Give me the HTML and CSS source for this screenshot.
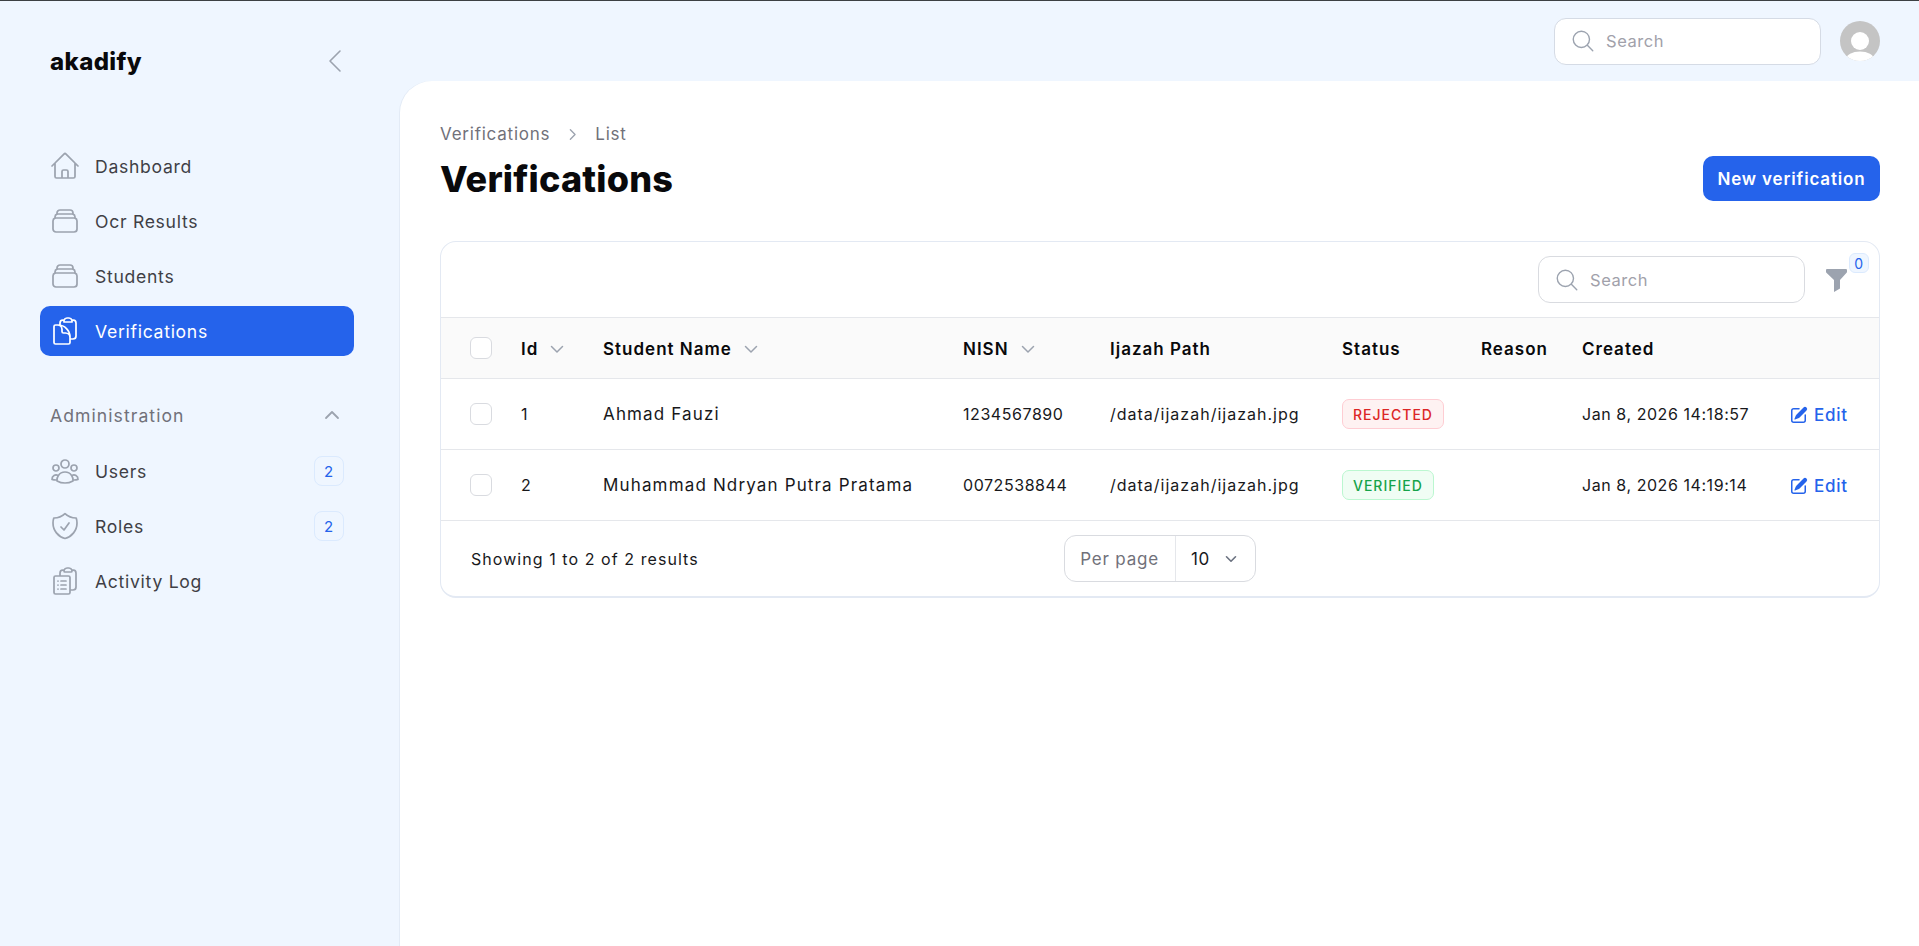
FILE: index.html
```html
<!DOCTYPE html>
<html lang="en">

<head>
    <meta charset="UTF-8">
    <meta name="viewport" content="width=device-width, initial-scale=1.0">
    <title>Verifications - akadify</title>
    <link rel="stylesheet" href="styles.css">
</head>

<body>
    <div class="app">
        <aside class="sidebar">
            <div class="sidebar__head">
                <span class="logo">akadify</span>
                <svg class="sidebar__collapse" viewBox="0 0 24 24" fill="none" stroke="currentColor" stroke-width="1.2" stroke-linecap="round" stroke-linejoin="round"><path d="M15.75 19.5L8.25 12l7.5-7.5"/></svg>
            </div>
            <nav class="nav">
                <ul class="nav__list">
                    <li><a class="nav__link" href="#">
                        <svg class="nav__icon" viewBox="0 0 24 24" fill="none" stroke="currentColor" stroke-linecap="round" stroke-linejoin="round"><path d="M2.25 12l8.954-8.955c.44-.439 1.152-.439 1.591 0L21.75 12M4.5 9.75v10.125c0 .621.504 1.125 1.125 1.125H9.75v-4.875c0-.621.504-1.125 1.125-1.125h2.25c.621 0 1.125.504 1.125 1.125V21h4.125c.621 0 1.125-.504 1.125-1.125V9.75M8.25 21h8.25"/></svg>
                        <span>Dashboard</span></a></li>
                    <li><a class="nav__link" href="#">
                        <svg class="nav__icon" viewBox="0 0 24 24" fill="none" stroke="currentColor" stroke-linecap="round" stroke-linejoin="round"><path d="M6 6.878V6a2.25 2.25 0 012.25-2.25h7.5A2.25 2.25 0 0118 6v.878m-12 0c.235-.083.487-.128.75-.128h10.5c.263 0 .515.045.75.128m-12 0A2.25 2.25 0 004.5 9v.878m13.5-3A2.25 2.25 0 0119.5 9v.878m0 0a2.246 2.246 0 00-.75-.128H5.25c-.263 0-.515.045-.75.128m15 0A2.25 2.25 0 0121 12v6a2.25 2.25 0 01-2.25 2.25H5.25A2.25 2.25 0 013 18v-6c0-.98.626-1.813 1.5-2.122"/></svg>
                        <span>Ocr Results</span></a></li>
                    <li><a class="nav__link" href="#">
                        <svg class="nav__icon" viewBox="0 0 24 24" fill="none" stroke="currentColor" stroke-linecap="round" stroke-linejoin="round"><path d="M6 6.878V6a2.25 2.25 0 012.25-2.25h7.5A2.25 2.25 0 0118 6v.878m-12 0c.235-.083.487-.128.75-.128h10.5c.263 0 .515.045.75.128m-12 0A2.25 2.25 0 004.5 9v.878m13.5-3A2.25 2.25 0 0119.5 9v.878m0 0a2.246 2.246 0 00-.75-.128H5.25c-.263 0-.515.045-.75.128m15 0A2.25 2.25 0 0121 12v6a2.25 2.25 0 01-2.25 2.25H5.25A2.25 2.25 0 013 18v-6c0-.98.626-1.813 1.5-2.122"/></svg>
                        <span>Students</span></a></li>
                    <li><a class="nav__link nav__link--active" href="#">
                        <svg class="nav__icon" viewBox="0 0 24 24" fill="none" stroke="currentColor" stroke-linecap="round" stroke-linejoin="round"><path d="M8.25 7.5V6.108c0-1.135.845-2.098 1.976-2.192.373-.03.748-.057 1.123-.08M15.75 18H18a2.25 2.25 0 002.25-2.25V6.108c0-1.135-.845-2.098-1.976-2.192a48.424 48.424 0 00-1.123-.08M15.75 18.75v-1.875a3.375 3.375 0 00-3.375-3.375h-1.5a1.125 1.125 0 01-1.125-1.125v-1.5A3.375 3.375 0 006.375 7.5H5.25m11.9-3.664A2.251 2.251 0 0015 2.25h-1.5a2.251 2.251 0 00-2.15 1.586m5.8 0c.065.21.1.433.1.664v.75h-6V4.5c0-.231.035-.454.1-.664M6.75 7.5H4.875c-.621 0-1.125.504-1.125 1.125v12c0 .621.504 1.125 1.125 1.125h9.75c.621 0 1.125-.504 1.125-1.125V16.5a9 9 0 00-9-9z"/></svg>
                        <span>Verifications</span></a></li>
                </ul>

                <div class="nav__group">
                    <span>Administration</span>
                    <svg class="nav__group-icon" viewBox="0 0 20 20" fill="none" stroke="currentColor" stroke-width="1.5" stroke-linecap="round" stroke-linejoin="round"><path d="M5 12.5l5-5 5 5"/></svg>
                </div>
                <ul class="nav__list">
                    <li><a class="nav__link" href="#">
                        <svg class="nav__icon" viewBox="0 0 24 24" fill="none" stroke="currentColor" stroke-linecap="round" stroke-linejoin="round"><path d="M18 18.72a9.094 9.094 0 003.741-.479 3 3 0 00-4.682-2.72m.94 3.198l.001.031c0 .225-.012.447-.037.666A11.944 11.944 0 0112 21c-2.17 0-4.207-.576-5.963-1.584A6.062 6.062 0 016 18.719m12 0a5.971 5.971 0 00-.941-3.197m0 0A5.995 5.995 0 0012 12.75a5.995 5.995 0 00-5.058 2.772m0 0a3 3 0 00-4.681 2.72 8.986 8.986 0 003.74.477m.94-3.197a5.971 5.971 0 00-.94 3.197M15 6.75a3 3 0 11-6 0 3 3 0 016 0zm6 3a2.25 2.25 0 11-4.5 0 2.25 2.25 0 014.5 0zm-13.5 0a2.25 2.25 0 11-4.5 0 2.25 2.25 0 014.5 0z"/></svg>
                        <span>Users</span><span class="count">2</span></a></li>
                    <li><a class="nav__link" href="#">
                        <svg class="nav__icon" viewBox="0 0 24 24" fill="none" stroke="currentColor" stroke-linecap="round" stroke-linejoin="round"><path d="M9 12.75L11.25 15 15 9.75m-3-7.036A11.959 11.959 0 013.598 6 11.99 11.99 0 003 9.749c0 5.592 3.824 10.29 9 11.623 5.176-1.332 9-6.03 9-11.622 0-1.31-.21-2.571-.598-3.751h-.152c-3.196 0-6.1-1.248-8.25-3.286z"/></svg>
                        <span>Roles</span><span class="count">2</span></a></li>
                    <li><a class="nav__link" href="#">
                        <svg class="nav__icon" viewBox="0 0 24 24" fill="none" stroke="currentColor" stroke-linecap="round" stroke-linejoin="round"><path d="M9 12h3.75M9 15h3.75M9 18h3.75m3 .75H18a2.25 2.25 0 002.25-2.25V6.108c0-1.135-.845-2.098-1.976-2.192a48.424 48.424 0 00-1.123-.08m-5.801 0c-.065.21-.1.433-.1.664 0 .414.336.75.75.75h4.5a.75.75 0 00.75-.75 2.25 2.25 0 00-.1-.664m-5.8 0A2.251 2.251 0 0113.5 2.25H15c1.012 0 1.867.668 2.15 1.586m-5.8 0c-.376.023-.75.05-1.124.08C9.095 4.01 8.25 4.973 8.25 6.108V8.25m0 0H4.875c-.621 0-1.125.504-1.125 1.125v11.25c0 .621.504 1.125 1.125 1.125h9.75c.621 0 1.125-.504 1.125-1.125V9.375c0-.621-.504-1.125-1.125-1.125H8.25zM6.75 12h.008v.008H6.75V12zm0 3h.008v.008H6.75V15zm0 3h.008v.008H6.75V18z"/></svg>
                        <span>Activity Log</span></a></li>
                </ul>
            </nav>
        </aside>

        <div class="page">
            <header class="topbar">
                <label class="search search--top">
                    <svg class="search__icon" viewBox="0 0 24 24" fill="none" stroke="currentColor" stroke-linecap="round" stroke-linejoin="round"><path d="M21 21l-5.197-5.197m0 0A7.5 7.5 0 105.196 5.196a7.5 7.5 0 0010.607 10.607z"/></svg>
                    <span>Search</span>
                </label>
                <svg class="avatar" viewBox="0 0 40 40">
                    <clipPath id="avatar-clip"><circle cx="20" cy="20" r="20"/></clipPath>
                    <g clip-path="url(#avatar-clip)">
                        <rect width="40" height="40" fill="#c4c4c4"/>
                        <circle cx="20" cy="20" r="9" fill="#fff"/>
                        <ellipse cx="20" cy="38" rx="14" ry="7.500" fill="#fff"/>
                    </g>
                </svg>
            </header>

            <main class="content">
                <div class="breadcrumb">
                    <span>Verifications</span>
                    <svg class="breadcrumb__sep" viewBox="0 0 20 20" fill="none" stroke="currentColor" stroke-width="1.6" stroke-linecap="round" stroke-linejoin="round"><path d="M7.5 4.5l5.5 5.5-5.5 5.5"/></svg>
                    <span>List</span>
                </div>
                <div class="heading">
                    <h1 class="heading__title">Verifications</h1>
                    <a class="btn" href="#">New verification</a>
                </div>

                <section class="card">
                    <div class="card__tools">
                        <label class="search">
                            <svg class="search__icon" viewBox="0 0 24 24" fill="none" stroke="currentColor" stroke-linecap="round" stroke-linejoin="round"><path d="M21 21l-5.197-5.197m0 0A7.5 7.5 0 105.196 5.196a7.5 7.5 0 0010.607 10.607z"/></svg>
                            <span>Search</span>
                        </label>
                        <div class="filter">
                            <svg class="filter__icon" viewBox="0 0 21 23" fill="currentColor"><path d="M0 1.200C0 .500.500 0 1.200 0h18.600c.700 0 1.200.500 1.200 1.200v1.600c0 .400-.100.700-.400 1L14 11v8.600L8 23V11L.400 3.800C.100 3.500 0 3.200 0 2.800z"/></svg>
                            <span class="filter__badge">0</span>
                        </div>
                    </div>

                    <table class="table">
                        <colgroup>
                            <col class="col-check">
                            <col class="col-id">
                            <col class="col-name">
                            <col class="col-nisn">
                            <col class="col-path">
                            <col class="col-status">
                            <col class="col-reason">
                            <col class="col-created">
                            <col>
                        </colgroup>
                        <thead>
                            <tr>
                                <th class="check-cell"><span class="checkbox"></span></th>
                                <th><span class="sort">Id <svg class="sort__icon" viewBox="0 0 20 20" fill="none" stroke="currentColor" stroke-width="1.5" stroke-linecap="round" stroke-linejoin="round"><path d="M4.500 7.500L10 13l5.500-5.500"/></svg></span></th>
                                <th><span class="sort">Student Name <svg class="sort__icon" viewBox="0 0 20 20" fill="none" stroke="currentColor" stroke-width="1.5" stroke-linecap="round" stroke-linejoin="round"><path d="M4.500 7.500L10 13l5.500-5.500"/></svg></span></th>
                                <th><span class="sort">NISN <svg class="sort__icon" viewBox="0 0 20 20" fill="none" stroke="currentColor" stroke-width="1.5" stroke-linecap="round" stroke-linejoin="round"><path d="M4.500 7.500L10 13l5.500-5.500"/></svg></span></th>
                                <th class="cell-label">Ijazah Path</th>
                                <th class="cell-label">Status</th>
                                <th class="cell-label">Reason</th>
                                <th class="cell-label">Created</th>
                                <th></th>
                            </tr>
                        </thead>
                        <tbody>
                            <tr>
                                <td class="check-cell"><span class="checkbox"></span></td>
                                <td>1</td>
                                <td class="cell-name">Ahmad Fauzi</td>
                                <td>1234567890</td>
                                <td class="cell-path">/data/ijazah/ijazah.jpg</td>
                                <td><span class="status status--rejected">REJECTED</span></td>
                                <td></td>
                                <td>Jan 8, 2026 14:18:57</td>
                                <td><a class="edit" href="#"><svg class="edit__icon" viewBox="0 0 20 20" fill="currentColor"><path d="M5.433 13.917l1.262-3.155A4 4 0 017.58 9.420l6.920-6.918a2.121 2.121 0 013 3l-6.920 6.918c-.383.383-.840.685-1.343.886l-3.154 1.262a.500.500 0 01-.650-.650z"/><path d="M3.500 5.750c0-.690.560-1.250 1.250-1.250H10A.750.750 0 0010 3H4.750A2.750 2.750 0 002 5.750v9.500A2.750 2.750 0 004.750 18h9.500A2.750 2.750 0 0017 15.250V10a.750.750 0 00-1.500 0v5.250c0 .690-.560 1.250-1.250 1.250h-9.500c-.690 0-1.250-.560-1.250-1.250v-9.500z"/></svg>Edit</a></td>
                            </tr>
                            <tr>
                                <td class="check-cell"><span class="checkbox"></span></td>
                                <td>2</td>
                                <td class="cell-name">Muhammad Ndryan Putra Pratama</td>
                                <td>0072538844</td>
                                <td class="cell-path">/data/ijazah/ijazah.jpg</td>
                                <td><span class="status status--verified">VERIFIED</span></td>
                                <td></td>
                                <td>Jan 8, 2026 14:19:14</td>
                                <td><a class="edit" href="#"><svg class="edit__icon" viewBox="0 0 20 20" fill="currentColor"><path d="M5.433 13.917l1.262-3.155A4 4 0 017.58 9.420l6.920-6.918a2.121 2.121 0 013 3l-6.920 6.918c-.383.383-.840.685-1.343.886l-3.154 1.262a.500.500 0 01-.650-.650z"/><path d="M3.500 5.750c0-.690.560-1.250 1.250-1.250H10A.750.750 0 0010 3H4.750A2.750 2.750 0 002 5.750v9.500A2.750 2.750 0 004.750 18h9.500A2.750 2.750 0 0017 15.250V10a.750.750 0 00-1.500 0v5.250c0 .690-.560 1.250-1.250 1.250h-9.500c-.690 0-1.250-.560-1.250-1.250v-9.500z"/></svg>Edit</a></td>
                            </tr>
                        </tbody>
                    </table>

                    <div class="card__foot">
                        <span class="card__summary">Showing 1 to 2 of 2 results</span>
                        <div class="perpage">
                            <span class="perpage__label">Per page</span>
                            <span class="perpage__value">10
                                <svg class="perpage__icon" viewBox="0 0 20 20" fill="none" stroke="currentColor" stroke-width="1.8" stroke-linecap="round" stroke-linejoin="round"><path d="M5 7.500l5 5 5-5"/></svg>
                            </span>
                        </div>
                    </div>
                </section>
            </main>
        </div>
    </div>
</body>

</html>
```

FILE: styles.css
```css
:root {
    --ff-primary: 'Inter', 'Liberation Sans', sans-serif;
    --clr-side: #eff6ff;
    --clr-primary: #2563eb;
    --clr-line: #e5e7eb;
    --clr-icon: #9ca3af;
    --clr-text: #18181b;
}

* {
    margin: 0;
    padding: 0;
    box-sizing: border-box;
}

html,
body {
    height: 100%;
}

body {
    background: var(--clr-side);
    border-top: 1px solid #3c4043;
    color: var(--clr-text);
    font-family: var(--ff-primary);
    font-size: 16px;
    letter-spacing: .035em;
    overflow: hidden;
}

a {
    color: inherit;
    text-decoration: none;
}

ul {
    list-style: none;
}

.app {
    display: flex;
    height: 945px;
}

/* sidebar */
.sidebar {
    width: 400px;
    flex: none;
    padding: 0 46px 0 40px;
}

.sidebar__head {
    display: flex;
    align-items: center;
    justify-content: space-between;
    height: 60px;
    margin: 30px 0 50px;
    padding-left: 10px;
}

.logo {
    font-size: 24px;
    font-weight: 800;
    color: #09090b;
    letter-spacing: .4px;
}

.sidebar__collapse {
    width: 32px;
    height: 32px;
    margin-right: 3px;
    color: #9ca3af;
}

.nav__list {
    display: flex;
    flex-direction: column;
    gap: 5px;
}

.nav__link {
    display: flex;
    align-items: center;
    gap: 14px;
    height: 50px;
    padding: 0 10px 0 9px;
    border-radius: 10px;
    color: #3f3f46;
    font-size: 17.6px;
    letter-spacing: .04em;
}

.nav__link--active {
    background: var(--clr-primary);
    color: #fff;
}

.nav__icon {
    width: 32px;
    height: 32px;
    flex: none;
    color: var(--clr-icon);
    stroke-width: 1.3;
}

.nav__link--active .nav__icon {
    color: #fff;
}

.count {
    display: flex;
    align-items: center;
    justify-content: center;
    width: 30px;
    height: 30px;
    margin-left: auto;
    border: 1px solid #dbeafe;
    border-radius: 8px;
    background: #eff6ff;
    color: var(--clr-primary);
    font-size: 15px;
}

.nav__group {
    display: flex;
    align-items: center;
    justify-content: space-between;
    height: 50px;
    margin: 34px 0 6px;
    padding: 0 10px;
    color: #71717a;
    font-size: 17.6px;
    letter-spacing: .06em;
}

.nav__group-icon {
    width: 24px;
    height: 24px;
    color: var(--clr-icon);
}

/* page */
.page {
    flex: 1;
    display: flex;
    flex-direction: column;
    min-width: 0;
}

.topbar {
    display: flex;
    align-items: center;
    justify-content: flex-end;
    gap: 19px;
    height: 80px;
    padding-right: 39px;
}

.search {
    display: flex;
    align-items: center;
    gap: 10px;
    width: 267px;
    height: 47px;
    padding: 0 15px;
    border: 1px solid #d9dbe0;
    border-radius: 12px;
    background: #fff;
    color: #a1a1aa;
    font-size: 16.5px;
}

.search--top {
    border-color: #d5dbe5;
}

.search__icon {
    width: 26px;
    height: 26px;
    flex: none;
    color: #9ca3af;
    stroke-width: 1.3;
}

.avatar {
    width: 40px;
    height: 40px;
}

.content {
    flex: 1;
    padding: 41px 39px 0 40px;
    border-top-left-radius: 32px;
    background: #fff;
    box-shadow: -1px 0 0 #e3ebf6;
}

.breadcrumb {
    display: flex;
    align-items: center;
    gap: 14px;
    height: 24px;
    color: #71717a;
    font-size: 17px;
    letter-spacing: .77px;
}

.breadcrumb__sep {
    width: 17px;
    height: 17px;
    color: var(--clr-icon);
}

.heading {
    display: flex;
    align-items: center;
    justify-content: space-between;
    height: 45px;
    margin-top: 10px;
}

.heading__title {
    font-size: 36px;
    font-weight: 800;
    color: #09090b;
    letter-spacing: .2px;
}

.btn {
    display: flex;
    align-items: center;
    justify-content: center;
    width: 177px;
    height: 45px;
    border-radius: 10px;
    background: var(--clr-primary);
    color: #fff;
    font-size: 17px;
    font-weight: 600;
    letter-spacing: .85px;
}

/* table card */
.card {
    margin-top: 40px;
    border: 1px solid #e3e9f3;
    border-bottom-width: 2px;
    border-radius: 16px;
    overflow: hidden;
}

.card__tools {
    display: flex;
    align-items: center;
    justify-content: flex-end;
    gap: 21px;
    height: 75px;
    padding-right: 32px;
}

.filter {
    position: relative;
    width: 21px;
    height: 23px;
    margin-top: 2px;
}

.filter__icon {
    display: block;
    width: 21px;
    height: 23px;
    color: #9ca3af;
}

.filter__badge {
    position: absolute;
    left: 23px;
    top: -16px;
    display: flex;
    align-items: center;
    justify-content: center;
    width: 20px;
    height: 20px;
    border: 1px solid #dbeafe;
    border-radius: 6px;
    background: #eff6ff;
    color: var(--clr-primary);
    font-size: 14px;
}

.table {
    width: 100%;
    border-collapse: collapse;
    table-layout: fixed;
    font-size: 16px;
}

.col-check { width: 80px; }
.col-id { width: 82px; }
.col-name { width: 360px; }
.col-nisn { width: 147px; }
.col-path { width: 232px; }
.col-status { width: 139px; }
.col-reason { width: 101px; }
.col-created { width: 207px; }

.table th,
.table td {
    text-align: left;
    white-space: nowrap;
    vertical-align: middle;
}

.table th {
    height: 61px;
    padding-top: 2px;
    border-top: 1px solid var(--clr-line);
    border-bottom: 1px solid var(--clr-line);
    background: #fafafa;
    color: #09090b;
    font-size: 17px;
    font-weight: 600;
    letter-spacing: 1px;
}

.table th.check-cell {
    padding-top: 0;
}

.table td {
    height: 71px;
    border-bottom: 1px solid var(--clr-line);
}

.table .cell-name {
    font-size: 17px;
    letter-spacing: 1.15px;
}

.table .cell-path {
    letter-spacing: 1px;
}

.check-cell {
    padding-left: 29px;
}

.checkbox {
    display: block;
    width: 22px;
    height: 22px;
    border: 1px solid #d9dbe0;
    border-radius: 6px;
    background: #fff;
}

.sort {
    display: inline-flex;
    align-items: center;
    gap: 9px;
}

.sort__icon {
    width: 20px;
    height: 20px;
    color: var(--clr-icon);
}

.status {
    display: inline-flex;
    align-items: center;
    height: 30px;
    padding: 0 10px;
    border: 1px solid;
    border-radius: 7px;
    font-size: 14px;
    font-weight: 500;
    letter-spacing: 1px;
}

.status--rejected {
    border-color: #fecdd3;
    background: #fef2f2;
    color: #dc2626;
}

.status--verified {
    border-color: #bbf7d0;
    background: #f0fdf4;
    color: #16a34a;
}

.edit {
    display: inline-flex;
    align-items: center;
    gap: 5px;
    vertical-align: middle;
    color: var(--clr-primary);
    font-size: 17px;
    font-weight: 500;
    letter-spacing: .7px;
}

.edit__icon {
    width: 20px;
    height: 20px;
}

.card__foot {
    display: grid;
    grid-template-columns: 1fr auto 1fr;
    align-items: center;
    height: 75px;
    padding: 0 30px;
}

.card__summary {
    letter-spacing: 1.06px;
}

.perpage {
    display: flex;
    align-items: center;
    height: 47px;
    border: 1px solid #d9dbe0;
    border-radius: 12px;
    font-size: 17px;
}

.perpage__label {
    display: flex;
    align-items: center;
    height: 100%;
    padding: 0 16px 0 15px;
    border-right: 1px solid var(--clr-line);
    color: #71717a;
    letter-spacing: .8px;
}

.perpage__value {
    display: flex;
    align-items: center;
    gap: 12px;
    padding: 0 15px;
}

.perpage__icon {
    width: 18px;
    height: 18px;
    color: #6b7280;
}
```
